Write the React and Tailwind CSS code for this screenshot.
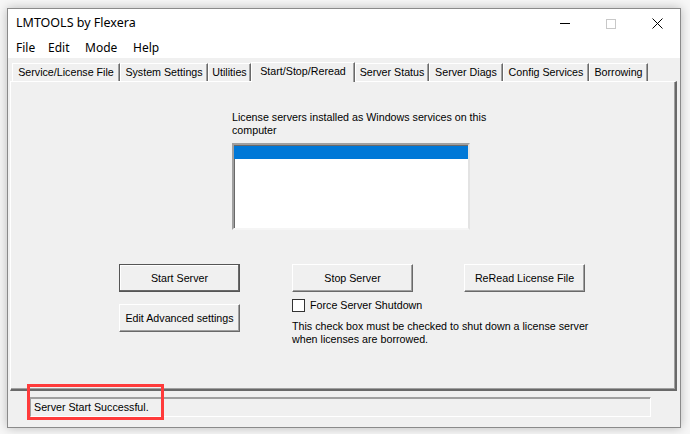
import React from "react"

const tabs = [
    { label: "Service/License File", w: "w-[108px]" },
    { label: "System Settings", w: "w-[88px]" },
    { label: "Utilities", w: "w-[43px]" },
    { label: "Start/Stop/Reread", w: "w-[104px]", active: true },
    { label: "Server Status", w: "w-[74px]" },
    { label: "Server Diags", w: "w-[74px]" },
    { label: "Config Services", w: "w-[86px]" },
    { label: "Borrowing", w: "w-[59px]" },
]

function Button({ children, primary, className = "" }) {
    return (
        <button
            className={
                "w-[121px] h-[28px] bg-[#f0f0f0] text-[10.7px] text-black border " +
                (primary
                    ? "border-[#555] shadow-[inset_-1px_-1px_0_#696969,inset_1px_1px_0_#fff] "
                    : "border-t-white border-l-white border-r-[#696969] border-b-[#696969] shadow-[inset_-1px_-1px_0_#a0a0a0] ") +
                className
            }
        >
            {children}
        </button>
    )
}

export default function App() {
    return (
        <div className="relative w-[690px] h-[434px] bg-[#f7f7f7] pt-[8px] pl-[7px] font-['Liberation_Sans',Arial,sans-serif] overflow-hidden">
            <div className="w-[674px] h-[420px] border border-[#8a8a8a] bg-[#f0f0f0] flex flex-col shadow-[0_0_10px_rgba(0,0,0,0.25)]">
                {/* title bar */}
                <div className="h-[29px] bg-white flex items-center justify-between">
                    <span className="pl-[8px] text-[12.5px] text-black font-['Noto_Sans',sans-serif]">LMTOOLS by Flexera</span>
                    <div className="flex h-full">
                        <div className="w-[46px] h-full flex items-center justify-center">
                            <div className="w-[10px] h-px bg-black" />
                        </div>
                        <div className="w-[46px] h-full flex items-center justify-center">
                            <div className="w-[10px] h-[10px] border border-[#c8c8c8]" />
                        </div>
                        <div className="w-[46px] h-full flex items-center justify-center">
                            <svg width="11" height="11" viewBox="0 0 11 11">
                                <path d="M0.5 0.5 L10.5 10.5 M10.5 0.5 L0.5 10.5" stroke="#000" strokeWidth="1" />
                            </svg>
                        </div>
                    </div>
                </div>

                {/* menu bar */}
                <div className="h-[20px] bg-white flex items-center pl-[8px] text-[12px] text-black font-['Noto_Sans',sans-serif]">
                    <span className="w-[32px]">File</span>
                    <span className="w-[37px]">Edit</span>
                    <span className="w-[48px]">Mode</span>
                    <span>Help</span>
                </div>

                {/* tabs */}
                <div className="flex items-end pl-[4px] pt-[3px] h-[23px]">
                    {tabs.map((t) =>
                        t.active ? (
                            <div
                                key={t.label}
                                className={t.w + " h-[20px] relative -mb-px z-10 bg-[#f0f0f0] border-t border-l border-white border-r border-r-[#696969] shadow-[inset_-1px_0_0_#a0a0a0] text-[10.7px] flex items-center justify-center pb-[2px]"}
                            >
                                {t.label}
                            </div>
                        ) : (
                            <div
                                key={t.label}
                                className={t.w + " h-[18px] border-t border-l border-white border-r border-r-[#696969] shadow-[inset_-1px_0_0_#a0a0a0] text-[10.7px] flex items-center justify-center"}
                            >
                                {t.label}
                            </div>
                        )
                    )}
                </div>

                {/* panel */}
                <div className="ml-[2px] w-[667px] h-[310px] border-t border-l border-white border-r-2 border-b-2 border-r-[#696969] border-b-[#696969] shadow-[inset_-1px_-1px_0_#a0a0a0] flex flex-col text-[10.7px] leading-[13px] text-black">
                    <div className="ml-[221px] mt-[29px] w-[270px]">
                        License servers installed as Windows services on this computer
                    </div>
                    <div className="ml-[221px] mt-[6px] w-[238px] h-[87px] bg-white border-2 border-t-[#a0a0a0] border-l-[#a0a0a0] border-r-[#e3e3e3] border-b-[#f5f5f5] shadow-[inset_1px_1px_0_#696969] pt-[1px]">
                        <div className="h-[13px] bg-[#0078d7]" />
                    </div>

                    <div className="flex ml-[108px] mt-[34px]">
                        <Button primary>Start Server</Button>
                        <Button className="ml-[52px]">Stop Server</Button>
                        <Button className="ml-[51px]">ReRead License File</Button>
                    </div>

                    <div className="flex ml-[108px] items-start">
                        <Button className="mt-[12px]">Edit Advanced settings</Button>
                        <div className="ml-[52px] mt-[7px] flex flex-col">
                            <div className="flex items-center h-[13px]">
                                <div className="w-[13px] h-[13px] bg-white border border-[#333]" />
                                <span className="ml-[5px]">Force Server Shutdown</span>
                            </div>
                            <div className="mt-[8px] w-[320px]">
                                This check box must be checked to shut down a license server when licenses are borrowed.
                            </div>
                        </div>
                    </div>
                </div>

                {/* status bar */}
                <div className="ml-[22px] mt-[6px] w-[621px] h-[20px] border border-t-[#a0a0a0] border-l-[#a0a0a0] border-r-white border-b-white shadow-[inset_0_1px_0_#a0a0a0] flex items-center pl-[3px] text-[10.7px] text-black">
                    Server Start Successful.
                </div>
            </div>

            {/* annotation */}
            <div className="absolute left-[27px] top-[384px] w-[137px] h-[36px] border-[3px] border-[#ff3b3b]" />
        </div>
    )
}
